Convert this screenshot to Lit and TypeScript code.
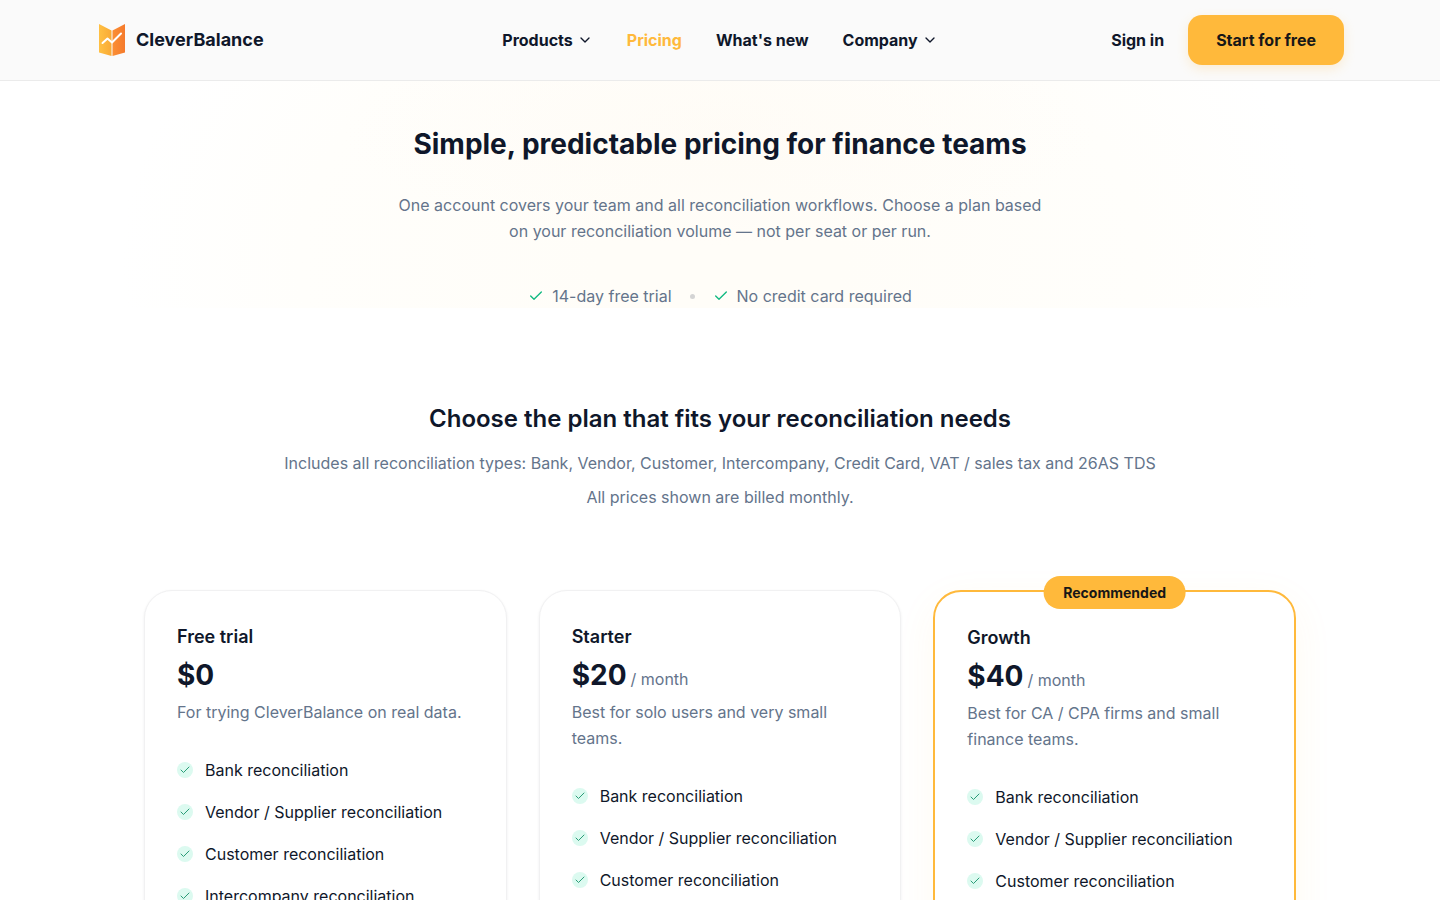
import { LitElement, html, css, svg } from "lit";
import { customElement, property } from "lit/decorators.js";
import { classMap } from "lit/directives/class-map.js";

interface Plan {
  name: string;
  price: string;
  period?: string;
  summary: string;
  features: string[];
  recommended?: boolean;
}

const FEATURES = [
  "Bank reconciliation",
  "Vendor / Supplier reconciliation",
  "Customer reconciliation",
  "Intercompany reconciliation",
];

const PLANS: Plan[] = [
  {
    name: "Free trial",
    price: "$0",
    summary: "For trying CleverBalance on real data.",
    features: FEATURES,
  },
  {
    name: "Starter",
    price: "$20",
    period: "/ month",
    summary: "Best for solo users and very small teams.",
    features: FEATURES,
  },
  {
    name: "Growth",
    price: "$40",
    period: "/ month",
    summary: "Best for CA / CPA firms and small finance teams.",
    features: FEATURES,
    recommended: true,
  },
];

const check = (width: number) =>
  svg`<path d="M20 6 9 17l-5-5" fill="none" stroke="currentColor" stroke-width=${width} stroke-linecap="round" stroke-linejoin="round"/>`;

@customElement("site-header")
export class SiteHeader extends LitElement {
  static styles = css`
    :host {
      display: block;
      background: #fafafa;
      border-bottom: 1px solid #ebebeb;
    }
    .bar {
      display: grid;
      grid-template-columns: 1fr auto 1fr;
      align-items: center;
      max-width: 1248px;
      height: 80px;
      margin: 0 auto;
      padding: 0 16px;
    }
    .brand {
      display: flex;
      align-items: center;
      gap: 8px;
      color: #0f172a;
      font-size: 18px;
      font-weight: 700;
      text-decoration: none;
    }
    .logo {
      width: 32px;
      height: 36px;
    }
    .menu,
    .actions {
      display: flex;
      align-items: center;
    }
    .menu {
      gap: 34px;
    }
    .actions {
      justify-content: flex-end;
      gap: 24px;
    }
    .link {
      display: flex;
      align-items: center;
      gap: 4px;
      padding: 0;
      border: 0;
      background: none;
      color: #0f172a;
      font: inherit;
      font-weight: 700;
      text-decoration: none;
      cursor: pointer;
    }
    .current {
      color: #ffb93b;
    }
    .chevron {
      width: 16px;
      height: 16px;
    }
    .cta {
      padding: 12px 28px;
      border-radius: 14px;
      background: #ffb93b;
      box-shadow: 0 4px 12px rgba(255, 185, 59, 0.2);
      color: #171717;
      font-weight: 700;
      text-decoration: none;
    }
  `;

  private chevron() {
    return html`<svg class="chevron" viewBox="0 0 24 24" aria-hidden="true">
      <path d="m6 9 6 6 6-6" fill="none" stroke="currentColor" stroke-width="2" stroke-linecap="round" stroke-linejoin="round" />
    </svg>`;
  }

  render() {
    return html`
      <header class="bar">
        <a class="brand" href="#">
          <svg class="logo" viewBox="0 0 32 36" aria-hidden="true">
            <defs>
              <linearGradient id="left" x1="0" x2="1"><stop stop-color="#ffc043" /><stop offset="1" stop-color="#f9aa36" /></linearGradient>
              <linearGradient id="right" x1="0" x2="1"><stop stop-color="#fb8f34" /><stop offset="1" stop-color="#f57a2c" /></linearGradient>
            </defs>
            <path d="M3 2 15.500 8.500V34L3 30.500Z" fill="url(#left)" />
            <path d="M29 2 16.500 8.500V34L29 30.500Z" fill="url(#right)" />
            <path d="m6.500 21 5-4.500 4.500 4 9-9" fill="none" stroke="#fff" stroke-width="2" stroke-linecap="round" stroke-linejoin="round" />
          </svg>
          CleverBalance
        </a>
        <nav class="menu">
          <button class="link" type="button">Products ${this.chevron()}</button>
          <a class="link current" href="#">Pricing</a>
          <a class="link" href="#">What's new</a>
          <button class="link" type="button">Company ${this.chevron()}</button>
        </nav>
        <div class="actions">
          <a class="link" href="#">Sign in</a>
          <a class="cta" href="#">Start for free</a>
        </div>
      </header>
    `;
  }
}

@customElement("plan-card")
export class PlanCard extends LitElement {
  @property({ attribute: false }) plan!: Plan;

  static styles = css`
    :host {
      display: grid;
    }
    .card {
      position: relative;
      padding: 32px;
      border: 1px solid #f1f1f2;
      border-radius: 28px;
      background: #fff;
      box-shadow: 0 1px 3px rgba(15, 23, 42, 0.07);
    }
    .recommended {
      border: 2px solid #ffb93b;
      box-shadow: 0 12px 40px rgba(255, 185, 59, 0.07);
    }
    .badge {
      position: absolute;
      top: -16px;
      left: 50%;
      transform: translateX(-50%);
      padding: 4px 20px;
      border-radius: 17px;
      background: #ffb93b;
      color: #171717;
      font-size: 14px;
      font-weight: 700;
      line-height: 25px;
    }
    .name {
      margin: 0;
      font-size: 18px;
      font-weight: 600;
      line-height: 28px;
    }
    .price {
      display: flex;
      align-items: baseline;
      gap: 4px;
      margin: 6px 0;
      color: #64748b;
      line-height: 20px;
    }
    .amount {
      color: #0f172a;
      font-size: 28px;
      font-weight: 700;
      line-height: 36px;
    }
    .summary {
      margin: 0 0 32px;
      color: #64748b;
    }
    .features {
      display: grid;
      gap: 16px;
      margin: 0;
      padding: 0;
      list-style: none;
    }
    .feature {
      display: flex;
      align-items: center;
      gap: 12px;
    }
    .tick {
      display: grid;
      place-items: center;
      width: 16px;
      height: 16px;
      border-radius: 50%;
      background: #dcfaf0;
      color: #2a9d78;
    }
    .mark {
      width: 12px;
      height: 12px;
    }
  `;

  render() {
    const { name, price, period, summary, features, recommended } = this.plan;
    return html`
      <article class=${classMap({ card: true, recommended: !!recommended })}>
        ${recommended ? html`<span class="badge">Recommended</span>` : null}
        <h3 class="name">${name}</h3>
        <p class="price"><span class="amount">${price}</span>${period ? html`<span>${period}</span>` : null}</p>
        <p class="summary">${summary}</p>
        <ul class="features">
          ${features.map(
            (f) => html`<li class="feature">
              <span class="tick"><svg class="mark" viewBox="0 0 24 24" aria-hidden="true">${check(2)}</svg></span>
              ${f}
            </li>`
          )}
        </ul>
      </article>
    `;
  }
}

@customElement("app-root")
export class AppRoot extends LitElement {
  static styles = css`
    :host {
      display: block;
      min-height: 100vh;
      background: #fff;
      color: #0f172a;
      font-family: Inter, sans-serif;
      font-size: 16px;
      line-height: 26px;
    }
    .hero {
      padding-top: 40px;
      background:
        radial-gradient(380px 120px at 50% 20%, rgba(255, 248, 240, 0.3), rgba(255, 248, 240, 0)),
        radial-gradient(600px 420px at 50% 80%, #fffdf8 20%, #fffefb 70%, #fff 100%);
      text-align: center;
    }
    .title {
      margin: 0 0 25px;
      font-size: 28px;
      font-weight: 700;
      line-height: 46px;
    }
    .lead {
      max-width: 660px;
      margin: 0 auto 40px;
      color: #64748b;
    }
    .perks {
      display: flex;
      justify-content: center;
      align-items: center;
      gap: 18px;
      color: #64748b;
      line-height: 24px;
    }
    .perk {
      display: flex;
      align-items: center;
      gap: 8px;
    }
    .perk-icon {
      width: 16px;
      height: 16px;
      color: #10b981;
    }
    .dot {
      width: 5px;
      height: 5px;
      border-radius: 50%;
      background: #d4d4d4;
    }
    .plans {
      max-width: 1152px;
      margin: 0 auto;
      padding: 96px 32px;
    }
    .intro {
      margin-bottom: 80px;
      text-align: center;
    }
    .subtitle {
      margin: 0 0 16px;
      font-size: 24px;
      font-weight: 600;
      line-height: 30px;
    }
    .note {
      margin: 0 0 8px;
      color: #64748b;
    }
    .grid {
      display: grid;
      grid-template-columns: repeat(3, 1fr);
      align-items: start;
      gap: 32px;
    }
  `;

  private perk(text: string) {
    return html`<span class="perk"><svg class="perk-icon" viewBox="0 0 24 24" aria-hidden="true">${check(2)}</svg>${text}</span>`;
  }

  render() {
    return html`
      <site-header></site-header>
      <main>
        <section class="hero">
          <h1 class="title">Simple, predictable pricing for finance teams</h1>
          <p class="lead">
            One account covers your team and all reconciliation workflows. Choose a plan based on your
            reconciliation volume — not per seat or per run.
          </p>
          <div class="perks">
            ${this.perk("14-day free trial")}
            <span class="dot"></span>
            ${this.perk("No credit card required")}
          </div>
        </section>
        <section class="plans">
          <div class="intro">
            <h2 class="subtitle">Choose the plan that fits your reconciliation needs</h2>
            <p class="note">
              Includes all reconciliation types: Bank, Vendor, Customer, Intercompany, Credit Card, VAT / sales tax and 26AS TDS
            </p>
            <p class="note">All prices shown are billed monthly.</p>
          </div>
          <div class="grid">${PLANS.map((p) => html`<plan-card .plan=${p}></plan-card>`)}</div>
        </section>
      </main>
    `;
  }
}
